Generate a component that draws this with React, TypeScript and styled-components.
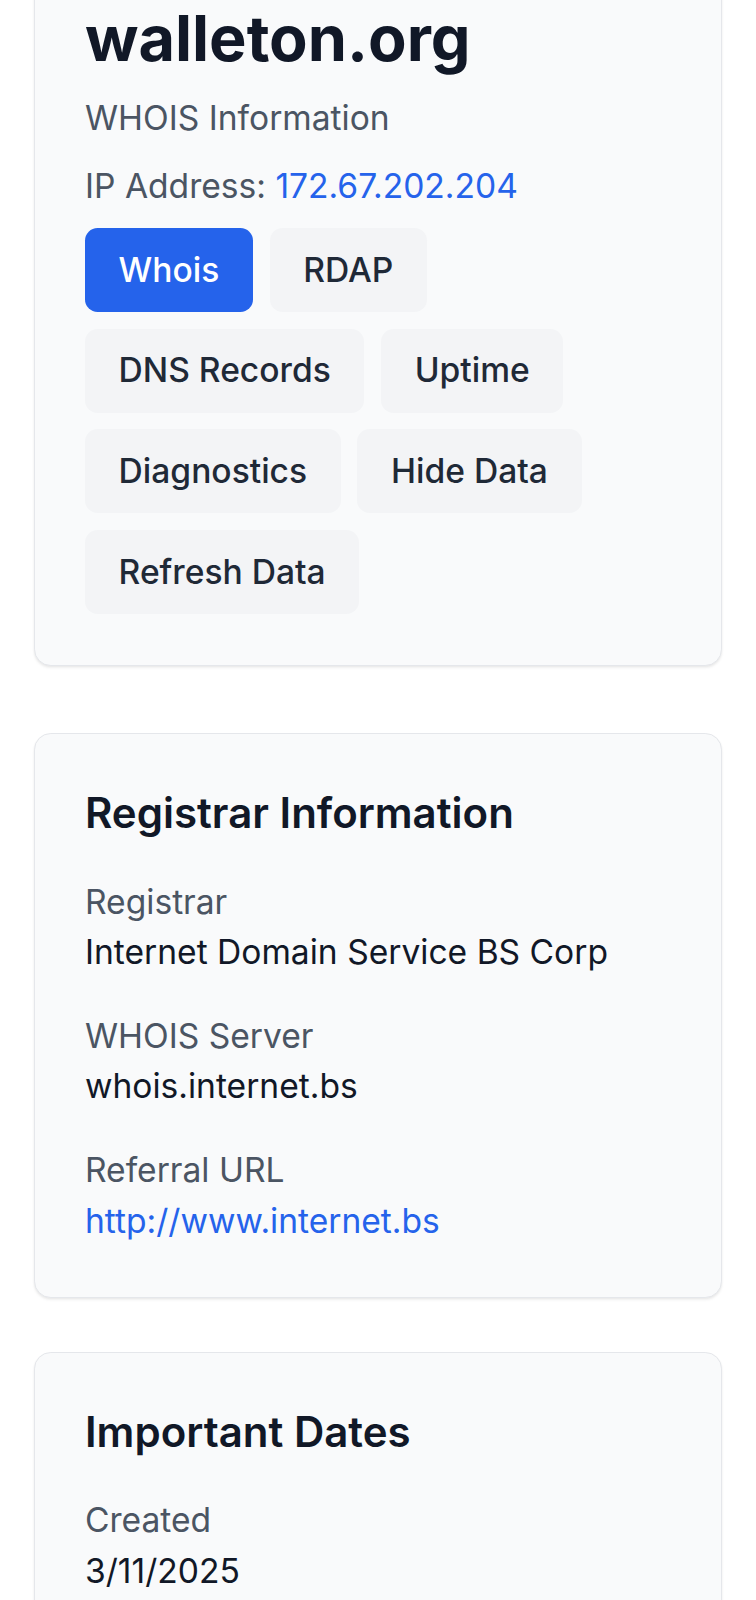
import styled, { createGlobalStyle } from "styled-components";

const GlobalStyle = createGlobalStyle`
  html, body {
    margin: 0;
    padding: 0;
    background: #ffffff;
  }
  body {
    font-family: Inter, "Noto Sans", "Liberation Sans", sans-serif;
    color: #111827;
  }
  * {
    box-sizing: border-box;
  }
`;

const Page = styled.main`
  display: flex;
  flex-direction: column;
  padding: 0 33.6px 67.2px;
  margin-top: -50.4px;
`;

const Card = styled.section<{ $gap?: number }>`
  background: #f9fafb;
  border: 1px solid #e5e7eb;
  border-radius: 16.8px;
  box-shadow: 0 2px 3px rgba(0, 0, 0, 0.06), 0 1px 2px rgba(0, 0, 0, 0.04);
  padding: 50.4px;
  margin-top: ${(p) => p.$gap ?? 0}px;
`;

const Title = styled.h1`
  margin: 0;
  font-size: 63px;
  line-height: 75.6px;
  font-weight: 700;
  color: #111827;
`;

const Subtitle = styled.p`
  margin: 16.8px 0 0;
  font-size: 33.6px;
  line-height: 50.4px;
  color: #4b5563;
`;

const Link = styled.a`
  color: #2563eb;
  text-decoration: none;
`;

const ButtonRow = styled.div`
  display: flex;
  flex-wrap: wrap;
  gap: 16.8px;
  margin-top: 16.8px;
`;

const TabButton = styled.button<{ $active?: boolean }>`
  border: none;
  border-radius: 12.6px;
  padding: 16.8px 33.6px;
  font-family: inherit;
  font-size: 33.6px;
  line-height: 50.4px;
  font-weight: 500;
  cursor: pointer;
  background: ${(p) => (p.$active ? "#2563eb" : "#f3f4f6")};
  color: ${(p) => (p.$active ? "#ffffff" : "#1f2937")};
`;

const SectionTitle = styled.h2`
  margin: 0 0 33.6px;
  font-size: 42px;
  line-height: 58.8px;
  font-weight: 600;
  color: #111827;
`;

const FieldList = styled.dl`
  margin: 0;
  display: flex;
  flex-direction: column;
  gap: 33.6px;
`;

const Field = styled.div`
  display: flex;
  flex-direction: column;
`;

const Label = styled.dt`
  font-size: 33.6px;
  line-height: 50.4px;
  color: #4b5563;
`;

const Value = styled.dd`
  margin: 0;
  font-size: 33.6px;
  line-height: 50.4px;
  color: #111827;
`;

const tabs = ["Whois", "RDAP", "DNS Records", "Uptime", "Diagnostics", "Hide Data", "Refresh Data"];

const registrar = [
  { label: "Registrar", value: "Internet Domain Service BS Corp" },
  { label: "WHOIS Server", value: "whois.internet.bs" },
  { label: "Referral URL", value: "http://www.internet.bs", link: true },
];

const dates = [{ label: "Created", value: "3/11/2025" }];

export default function App() {
  return (
    <>
      <GlobalStyle />
      <Page>
        <Card>
          <Title>walleton.org</Title>
          <Subtitle>WHOIS Information</Subtitle>
          <Subtitle>
            IP Address: <Link href="#">172.67.202.204</Link>
          </Subtitle>
          <ButtonRow>
            {tabs.map((t) => (
              <TabButton key={t} $active={t === "Whois"}>
                {t}
              </TabButton>
            ))}
          </ButtonRow>
        </Card>

        <Card $gap={67.2}>
          <SectionTitle>Registrar Information</SectionTitle>
          <FieldList>
            {registrar.map((f) => (
              <Field key={f.label}>
                <Label>{f.label}</Label>
                <Value>{f.link ? <Link href="#">{f.value}</Link> : f.value}</Value>
              </Field>
            ))}
          </FieldList>
        </Card>

        <Card $gap={54}>
          <SectionTitle>Important Dates</SectionTitle>
          <FieldList>
            {dates.map((f) => (
              <Field key={f.label}>
                <Label>{f.label}</Label>
                <Value>{f.value}</Value>
              </Field>
            ))}
          </FieldList>
        </Card>
      </Page>
    </>
  );
}
